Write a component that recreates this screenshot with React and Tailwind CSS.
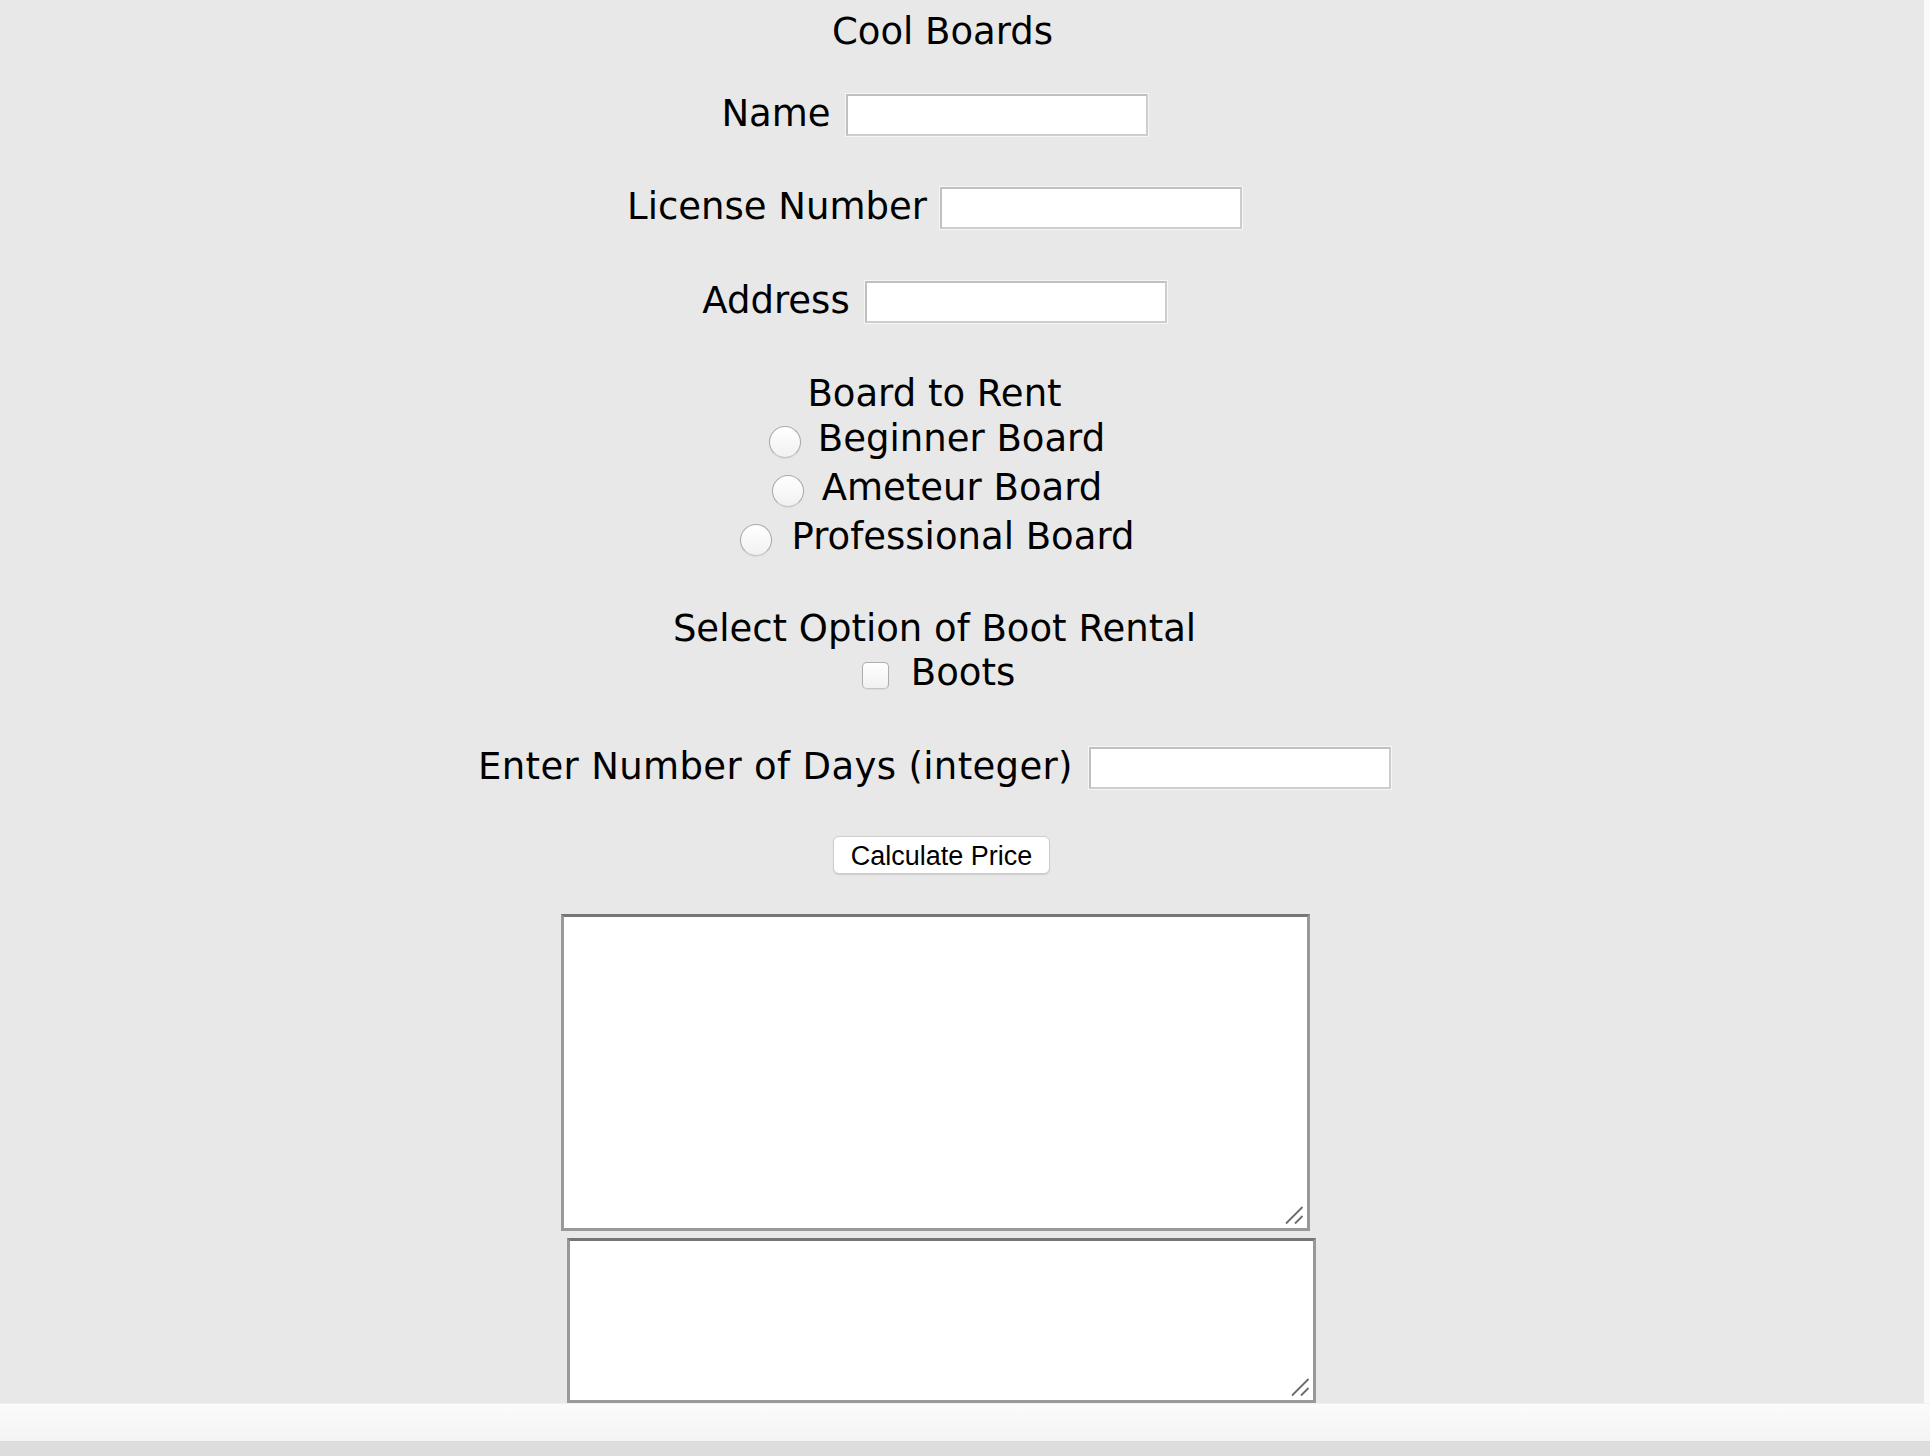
import React from "react";

const font = { fontFamily: '"DejaVu Sans", Verdana, sans-serif' };

function TextInput() {
  return (
    <input
      type="text"
      className="w-[302px] h-[42px] bg-white border-2 border-[#c0c0c0] border-r-[#cdcdcd] border-b-[#cdcdcd] shadow-[0_0_0_1px_#f6f6f6] outline-none shrink-0"
    />
  );
}

function Radio() {
  return (
    <input
      type="radio"
      name="board"
      className="appearance-none w-[32px] h-[32px] rounded-full bg-gradient-to-b from-white to-[#f1f1f1] border-[1.5px] border-[#a9a9a9] border-b-[#c4c4c4] shadow-[0_1px_1px_rgba(0,0,0,0.06)] shrink-0 mt-[6px]"
    />
  );
}

function Handle() {
  return (
    <svg
      className="absolute right-[3px] bottom-[3px]"
      width="20"
      height="20"
      viewBox="0 0 20 20"
    >
      <line x1="2" y1="18.5" x2="18.5" y2="2" stroke="#6b6b6b" strokeWidth="1.8" />
      <line x1="11" y1="18.5" x2="18.5" y2="11" stroke="#6b6b6b" strokeWidth="1.8" />
    </svg>
  );
}

export default function App() {
  return (
    <div className="w-[1930px] h-[1456px] overflow-hidden flex flex-col bg-[#e8e8e8]">
      <div className="flex h-[1403px] shrink-0">
        <div
          className="flex-1 overflow-hidden flex flex-col items-center pt-[7px] pr-[41px] text-[37px] text-black"
          style={font}
        >
          <div className="h-[49px] flex items-center ml-[2px]">Cool Boards</div>

          <div className="h-[49px] flex items-center gap-[15px] mt-[34px] mr-[14px]">
            <span className="-mt-[2px]">Name</span>
            <TextInput />
          </div>

          <div className="h-[49px] flex items-center gap-[13px] mt-[44px] mr-[14px]">
            <span className="-mt-[2px]">License Number</span>
            <TextInput />
          </div>

          <div className="h-[49px] flex items-center gap-[15px] mt-[45px] mr-[14px]">
            <span className="-mt-[2px]">Address</span>
            <TextInput />
          </div>

          <div className="h-[40px] flex items-center mt-[48px] mr-[14px]">Board to Rent</div>

          <div className="h-[49px] flex items-center gap-[17px] mr-[9px]">
            <Radio />
            <span>Beginner Board</span>
          </div>
          <div className="h-[49px] flex items-center gap-[18px] mr-[9px]">
            <Radio />
            <span>Ameteur Board</span>
          </div>
          <div className="h-[49px] flex items-center gap-[20px] mr-[9px]">
            <Radio />
            <span>Professional Board</span>
          </div>

          <div className="h-[44px] flex items-center mt-[46px] mr-[14px]">
            Select Option of Boot Rental
          </div>
          <div className="h-[44px] flex items-center gap-[22px] mr-[6px]">
            <input
              type="checkbox"
              className="appearance-none w-[27px] h-[27px] rounded-[5px] bg-gradient-to-b from-white to-[#f1f1f1] border-[1.5px] border-[#adadad] border-b-[#c4c4c4] shadow-[0_1px_1px_rgba(0,0,0,0.06)] shrink-0 mt-[5px]"
            />
            <span>Boots</span>
          </div>

          <div className="h-[49px] flex items-center gap-[16px] mt-[48px] mr-[14px]">
            <span className="-mt-[2px] tracking-[0.35px]">Enter Number of Days (integer)</span>
            <TextInput />
          </div>

          <button
            type="button"
            className="mt-[44px] w-[217px] h-[38px] bg-white rounded-[6px] border border-[#cdcdcd] shadow-[0_1px_1px_rgba(0,0,0,0.12)] text-[27px] leading-none text-black flex items-center justify-center pt-[3px] shrink-0"
            style={{ fontFamily: '"Liberation Sans", Arial, sans-serif' }}
          >
            Calculate Price
          </button>

          <div className="relative mt-[40px] w-[749px] h-[317px] shrink-0 bg-white border-[3px] border-[#999999] border-t-[#767676] mr-[13px]">
            <Handle />
          </div>

          <div className="relative mt-[7px] w-[749px] h-[165px] shrink-0 bg-white border-[3px] border-[#999999] border-t-[#767676]">
            <Handle />
          </div>
        </div>
        <div className="w-[6px] bg-[#fafafa] shrink-0" />
      </div>
      <div className="h-[38px] shrink-0 bg-gradient-to-b from-[#fbfbfb] to-[#f4f4f4] border-t border-[#f0f0f0]" />
      <div className="h-[15px] shrink-0 bg-[#dddddd]" />
    </div>
  );
}
